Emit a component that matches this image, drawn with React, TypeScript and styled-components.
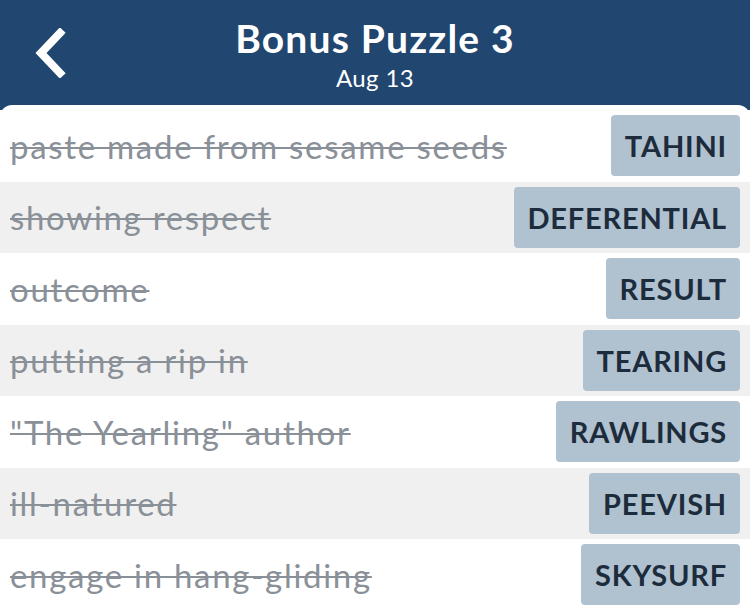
import React from 'react';
import styled, { createGlobalStyle } from 'styled-components';

const GlobalStyle = createGlobalStyle`
  html, body {
    margin: 0;
    padding: 0;
    background: #21466f;
  }
  body {
    font-family: Lato, 'Open Sans', sans-serif;
  }
`;

const Screen = styled.div`
  width: 750px;
  height: 610px;
  overflow: hidden;
  background: #21466f;
  display: flex;
  flex-direction: column;
`;

const Header = styled.header`
  height: 105px;
  flex: none;
  display: grid;
  grid-template-columns: 110px 1fr 110px;
  align-items: center;
`;

const BackButton = styled.button`
  border: 0;
  background: none;
  padding: 0;
  margin-left: 30px;
  width: 40px;
  height: 56px;
  display: flex;
  align-items: center;
  justify-content: center;
  cursor: pointer;
`;

const TitleBlock = styled.div`
  display: flex;
  flex-direction: column;
  align-items: center;
  color: #ffffff;
  padding-top: 2px;
`;

const Title = styled.h1`
  margin: 0;
  font-size: 39px;
  line-height: 44px;
  font-weight: 700;
  letter-spacing: 1.2px;
`;

const Subtitle = styled.p`
  margin: 4px 0 0;
  font-size: 24px;
  line-height: 28px;
  font-weight: 400;
  letter-spacing: 0.4px;
`;

const Card = styled.main`
  flex: 1;
  background: #ffffff;
  border-radius: 12px 12px 0 0;
  padding-top: 5px;
`;

const Row = styled.div<{ $shaded: boolean }>`
  height: 71.5px;
  display: flex;
  align-items: center;
  justify-content: space-between;
  padding: 0 10px;
  background: ${(p) => (p.$shaded ? '#f0f0f0' : '#ffffff')};
`;

const Clue = styled.span`
  font-size: 33px;
  letter-spacing: 1.7px;
  color: #8a9098;
  text-decoration: line-through;
  text-decoration-thickness: 2px;
  white-space: nowrap;
`;

const Answer = styled.span`
  height: 61px;
  display: flex;
  align-items: center;
  padding: 0 13px 0 14px;
  border-radius: 4px;
  background: #b0c1cf;
  color: #1d2c3c;
  font-size: 29px;
  font-weight: 700;
  letter-spacing: 0.8px;
`;

const ChevronLeft = () => (
  <svg width="34" height="50" viewBox="0 0 34 50">
    <path
      d="M27 5 L8 25 L27 45"
      fill="none"
      stroke="#ffffff"
      strokeWidth="8"
      strokeLinecap="square"
      strokeLinejoin="miter"
    />
  </svg>
);

const clues = [
  { clue: 'paste made from sesame seeds', answer: 'TAHINI' },
  { clue: 'showing respect', answer: 'DEFERENTIAL' },
  { clue: 'outcome', answer: 'RESULT' },
  { clue: 'putting a rip in', answer: 'TEARING' },
  { clue: '"The Yearling" author', answer: 'RAWLINGS' },
  { clue: 'ill-natured', answer: 'PEEVISH' },
  { clue: 'engage in hang-gliding', answer: 'SKYSURF' },
];

const App = () => (
  <>
    <GlobalStyle />
    <Screen>
      <Header>
        <BackButton aria-label="Back">
          <ChevronLeft />
        </BackButton>
        <TitleBlock>
          <Title>Bonus Puzzle 3</Title>
          <Subtitle>Aug 13</Subtitle>
        </TitleBlock>
        <div />
      </Header>
      <Card>
        {clues.map((c, i) => (
          <Row key={c.answer} $shaded={i % 2 === 1}>
            <Clue>{c.clue}</Clue>
            <Answer>{c.answer}</Answer>
          </Row>
        ))}
      </Card>
    </Screen>
  </>
);

export default App;
